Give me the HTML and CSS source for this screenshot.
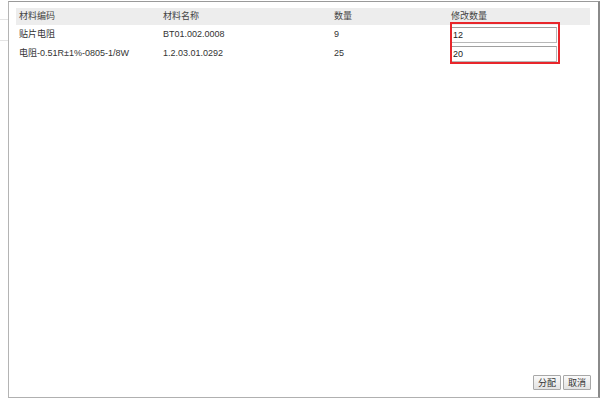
FILE: index.html
```html
<!DOCTYPE html>
<html lang="zh">
<head>
<meta charset="utf-8">
<title>修改数量</title>
<link rel="stylesheet" href="styles.css">
</head>
<body>
<div class="side">
  <div class="side-line"></div>
  <div class="side-line second"></div>
</div>
<div class="dialog">
  <div class="content">
    <div class="table-wrap">
      <table class="grid">
        <colgroup>
          <col class="c1"><col class="c2"><col class="c3"><col class="c4">
        </colgroup>
        <thead>
          <tr><th>材料编码</th><th>材料名称</th><th>数量</th><th>修改数量</th></tr>
        </thead>
        <tbody>
          <tr><td>贴片电阻</td><td>BT01.002.0008</td><td>9</td><td><input class="qty" type="text" value="12"></td></tr>
          <tr><td>电阻-0.51R±1%-0805-1/8W</td><td>1.2.03.01.0292</td><td>25</td><td><input class="qty" type="text" value="20"></td></tr>
        </tbody>
      </table>
      <div class="highlight"></div>
    </div>
  </div>
  <div class="footer">
    <button class="btn">分配</button>
    <button class="btn">取消</button>
  </div>
</div>
</body>
</html>
```
FILE: styles.css
```css
html, body {
  margin: 0;
  padding: 0;
  background: #fff;
}
body {
  display: flex;
  width: 600px;
  height: 400px;
  overflow: hidden;
  font-family: "Liberation Sans", "Noto Sans CJK SC", sans-serif;
  font-size: 9px;
  color: #333;
}
.side {
  width: 8px;
  padding-top: 19px;
  box-sizing: border-box;
}
.side-line {
  height: 1px;
  background: #e4e4e4;
}
.side-line.second {
  margin-top: 20px;
}
.dialog {
  margin-top: 1px;
  width: 592px;
  height: 397px;
  box-sizing: border-box;
  border-left: 1px solid #b4b4b4;
  border-top: 1px solid #9a9a9a;
  border-right: 2px solid #8a8a8a;
  border-bottom: 1px solid #b0b0b0;
  display: flex;
  flex-direction: column;
  padding: 6px 7px 7px 7px;
}
.content {
  flex: 1;
}
.table-wrap {
  position: relative;
}
.grid {
  width: 574px;
  border-collapse: collapse;
  table-layout: fixed;
}
.c1 { width: 144px; }
.c2 { width: 171px; }
.c3 { width: 117px; }
.c4 { width: 142px; }
.grid th {
  background: #ededed;
  font-weight: normal;
  text-align: left;
  height: 17px;
  padding: 0 3px;
  line-height: 17px;
  color: #444;
}
.grid td {
  height: 19px;
  padding: 0 3px;
  line-height: 19px;
  white-space: nowrap;
}
.qty {
  display: block;
  width: 106px;
  height: 16px;
  box-sizing: border-box;
  margin: 0;
  padding: 0 0 0 1px;
  border: 1px solid #b8b8b8;
  border-top-color: #a0a0a0;
  font-family: "Liberation Sans", sans-serif;
  font-size: 9px;
  color: #222;
  background: #fff;
}
.highlight {
  position: absolute;
  left: 434px;
  top: 14px;
  width: 110px;
  height: 42px;
  box-sizing: border-box;
  border: 2px solid #e8262b;
  pointer-events: none;
}
.footer {
  display: flex;
  justify-content: flex-end;
  gap: 2px;
  padding-right: 0;
}
.btn {
  height: 15px;
  width: 28px;
  padding: 0;
  margin: 0;
  font-family: "Liberation Sans", "Noto Sans CJK SC", sans-serif;
  font-size: 9px;
  color: #333;
  border: 1px solid #a8a8a8;
  border-radius: 1px;
  background: linear-gradient(#fafafa, #e2e2e2);
}
```
